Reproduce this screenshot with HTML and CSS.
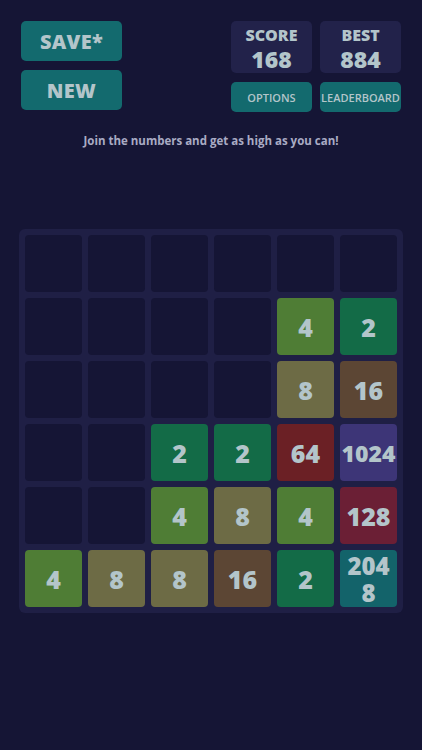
FILE: index.html
```html
<!DOCTYPE html>
<html>
<head>
<meta charset="utf-8">
<link rel="stylesheet" href="styles.css">
</head>
<body>
<div class="page">
  <header class="header">
    <div class="left">
      <button class="btn big">SAVE*</button>
      <button class="btn big">NEW</button>
    </div>
    <div class="right">
      <div class="stat"><div class="label">SCORE</div><div class="value">168</div></div>
      <div class="stat"><div class="label">BEST</div><div class="value">884</div></div>
      <button class="btn small">OPTIONS</button>
      <button class="btn small">LEADERBOARD</button>
    </div>
  </header>
  <p class="tagline">Join the numbers and get as high as you can!</p>
  <div class="board">
    <div class="cell"></div><div class="cell"></div><div class="cell"></div><div class="cell"></div><div class="cell"></div><div class="cell"></div>
    <div class="cell"></div><div class="cell"></div><div class="cell"></div><div class="cell"></div><div class="cell t4">4</div><div class="cell t2">2</div>
    <div class="cell"></div><div class="cell"></div><div class="cell"></div><div class="cell"></div><div class="cell t8">8</div><div class="cell t16">16</div>
    <div class="cell"></div><div class="cell"></div><div class="cell t2">2</div><div class="cell t2">2</div><div class="cell t64">64</div><div class="cell t1024">1024</div>
    <div class="cell"></div><div class="cell"></div><div class="cell t4">4</div><div class="cell t8">8</div><div class="cell t4">4</div><div class="cell t128">128</div>
    <div class="cell t4">4</div><div class="cell t8">8</div><div class="cell t8">8</div><div class="cell t16">16</div><div class="cell t2">2</div><div class="cell t2048"><span class="line">204</span><span class="line">8</span></div>
  </div>
</div>
</body>
</html>
```
FILE: styles.css
```css
html, body {
  margin: 0;
  padding: 0;
  background: #151535;
  height: 100%;
}
.page {
  font-family: "Open Sans", "Liberation Sans", sans-serif;
  font-weight: 700;
  color: #b3c5ca;
  padding: 21px 21px 0 19px;
}
.header {
  display: flex;
  justify-content: space-between;
  padding-left: 2px;
}
.left {
  display: flex;
  flex-direction: column;
  gap: 9px;
}
.btn {
  border: none;
  background: #136a6e;
  color: #b3c5ca;
  font-family: inherit;
  font-weight: 800;
  border-radius: 5px;
  padding: 0;
  margin: 0;
}
.btn.big {
  width: 101px;
  height: 40px;
  font-size: 20px;
  letter-spacing: 0.3px;
}
.right {
  display: grid;
  grid-template-columns: 81px 81px;
  grid-template-rows: 52px 30px;
  column-gap: 8px;
  row-gap: 9px;
}
.stat {
  background: #22224a;
  border-radius: 5px;
  display: flex;
  flex-direction: column;
  align-items: center;
  font-weight: 800;
}
.label {
  font-size: 16px;
  line-height: 16px;
  margin-top: 6px;
}
.value {
  font-size: 23px;
  line-height: 22px;
  margin-top: 5px;
}
.btn.small {
  font-size: 11px;
  font-weight: 600;
  white-space: nowrap;
  overflow: hidden;
}
.tagline {
  margin: 21px 0 0 0;
  text-align: center;
  font-size: 11.5px;
  line-height: 16px;
  color: #a9abc4;
  padding-left: 2px;
}
.board {
  margin-top: 80px;
  width: 372px;
  padding: 6px;
  background: #1f1f45;
  border-radius: 6px;
  display: grid;
  grid-template-columns: repeat(6, 57px);
  grid-auto-rows: 57px;
  gap: 6px;
}
.cell {
  background: #151535;
  border-radius: 4px;
  display: flex;
  flex-direction: column;
  align-items: center;
  justify-content: center;
  text-align: center;
  font-size: 25px;
  font-weight: 800;
  line-height: 26px;
  color: #b3c5ca;
}
.t2 { background: #136b47; }
.t4 { background: #4f7d35; }
.t8 { background: #6d6b45; }
.t16 { background: #5c4634; }
.t64 { background: #6b2025; }
.t128 { background: #6b1f35; }
.t1024 { background: #3d3577; font-size: 23px; }
.t2048 { background: #13636a; font-size: 24px; }
.t2048 .line { display: block; line-height: 27px; }
```
